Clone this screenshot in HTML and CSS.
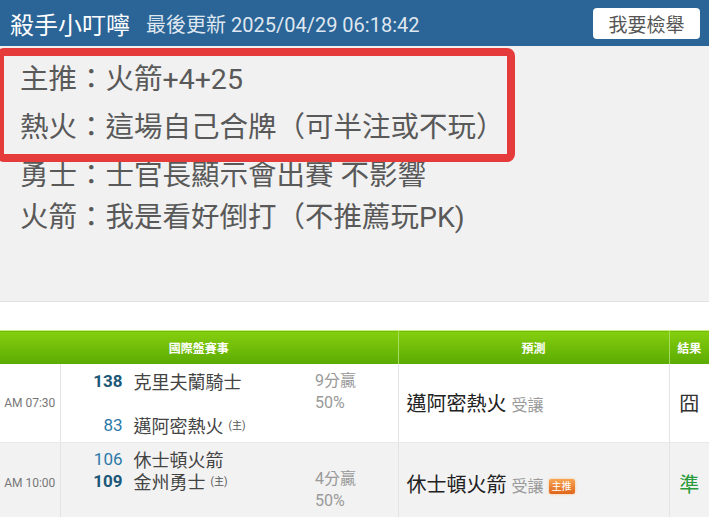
FILE: index.html
```html
<!DOCTYPE html>
<html lang="zh-Hant">
<head>
    <meta name="viewport" content="width=device-width, initial-scale=1.0">
    <title>殺手小叮嚀</title>
    <link rel="stylesheet" href="styles.css">
</head>
<body>
    <div class="page">
        <header class="topbar">
            <span class="title">殺手小叮嚀</span>
            <span class="updated">最後更新 2025/04/29 06:18:42</span>
            <button class="report">我要檢舉</button>
        </header>

        <section class="notes">
            <p>主推：火箭+4+25</p>
            <p>熱火：這場自己合牌（可半注或不玩）</p>
            <p>勇士：士官長顯示會出賽 不影響</p>
            <p class="last">火箭：我是看好倒打（不推薦玩PK)</p>
            <div class="highlight"></div>
        </section>

        <table class="games">
            <colgroup>
                <col class="c-time">
                <col class="c-teams">
                <col class="c-odds">
                <col class="c-pick">
                <col class="c-result">
            </colgroup>
            <thead>
                <tr>
                    <th colspan="3">國際盤賽事</th>
                    <th>預測</th>
                    <th>結果</th>
                </tr>
            </thead>
            <tbody>
                <tr class="row-a">
                    <td class="time">AM 07:30</td>
                    <td class="teams">
                        <div class="line"><span class="num fav">138</span><span class="name">克里夫蘭騎士</span></div>
                        <div class="line"></div>
                        <div class="line"><span class="num">83</span><span class="name">邁阿密熱火</span><span class="home">(主)</span></div>
                    </td>
                    <td class="odds">9分贏<br>50%</td>
                    <td class="pick">邁阿密熱火<span class="spread">受讓</span></td>
                    <td class="result">囧</td>
                </tr>
                <tr class="row-b">
                    <td class="time">AM 10:00</td>
                    <td class="teams">
                        <div class="line"><span class="num">106</span><span class="name">休士頓火箭</span></div>
                        <div class="line"><span class="num fav">109</span><span class="name">金州勇士</span><span class="home">(主)</span></div>
                    </td>
                    <td class="odds">4分贏<br>50%</td>
                    <td class="pick">休士頓火箭<span class="spread">受讓</span><span class="badge">主推</span></td>
                    <td class="result win">準</td>
                </tr>
            </tbody>
        </table>
    </div>
</body>
</html>
```

FILE: styles.css
```css
*{
    padding: 0;
    margin: 0;
    box-sizing: border-box;
    font-family: Roboto, "Noto Sans CJK TC", sans-serif;
}
body{
    background-color: #ffffff;
}
.page{
    width: 709px;
}
.topbar{
    display: flex;
    align-items: center;
    height: 46px;
    padding: 0 9px 0 10px;
    background-color: #2b6496;
}
.title{
    font-size: 24px;
    color: #ffffff;
    margin-right: 16px;
}
.updated{
    font-size: 20px;
    color: #dfe7f0;
}
.report{
    margin-left: auto;
    width: 107px;
    height: 31px;
    border: none;
    border-radius: 4px;
    background-color: #ffffff;
    color: #555555;
    font-size: 19px;
}
.notes{
    position: relative;
    height: 256px;
    padding: 10px 20px;
    background-color: #f1f1f1;
    border-bottom: 1px solid #e2e2e2;
}
.notes p{
    font-size: 28.5px;
    line-height: 48px;
    color: #595959;
}
.notes p.last{
    margin-top: -6px;
}
.highlight{
    position: absolute;
    left: -4px;
    top: 2px;
    width: 519px;
    height: 114px;
    border: 8px solid #e53b3b;
    border-radius: 8px;
}
.games{
    width: 709px;
    margin-top: 28px;
    border-collapse: collapse;
    table-layout: fixed;
}
.c-time{ width: 60px; }
.c-teams{ width: 245px; }
.c-odds{ width: 93px; }
.c-pick{ width: 271px; }
.c-result{ width: 40px; }
.games th{
    height: 33px;
    background: linear-gradient(#86cf0f, #5aaa02);
    border-top: 1px solid #c9ef80;
    color: #ffffff;
    font-size: 12px;
    font-weight: 700;
}
.games th + th{
    border-left: 1px solid #a8dc5c;
}
.games td{
    vertical-align: middle;
}
.row-a{
    height: 78px;
    background-color: #ffffff;
}
.row-b{
    height: 82px;
    background-color: #f2f2f2;
    border-top: 1px solid #e8e8e8;
}
.time{
    text-align: center;
    font-size: 12px;
    color: #777777;
    border-right: 1px solid #e4e4e4;
}
.games td.teams{
    vertical-align: top;
    padding: 6px 0;
}
.row-b td.teams{
    padding-top: 5px;
}
.line{
    display: flex;
    align-items: center;
    height: 22px;
}
.num{
    width: 62px;
    margin-right: 11px;
    text-align: right;
    font-size: 17px;
    color: #2c78a8;
}
.num.fav{
    font-weight: 700;
    color: #1c5878;
}
.name{
    font-size: 18px;
    color: #444444;
}
.home{
    font-size: 10px;
    color: #555555;
    margin-left: 5px;
}
.games td.odds{
    vertical-align: top;
    padding: 6px 0 0 10px;
    font-size: 16px;
    line-height: 22px;
    color: #999999;
}
.row-b td.odds{
    padding-top: 25px;
}
.pick{
    padding-left: 8px;
    font-size: 20px;
    color: #222222;
    border-left: 1px solid #e4e4e4;
}
.spread{
    margin-left: 5px;
    font-size: 16px;
    color: #9a9a9a;
}
.badge{
    display: inline-block;
    margin-left: 5px;
    padding: 0 3px;
    height: 15px;
    line-height: 15px;
    font-size: 10px;
    color: #ffffff;
    vertical-align: 2px;
    border-radius: 2px;
    background: linear-gradient(#f6a552, #e0661d);
    box-shadow: 0 0 3px #f7c98a;
}
.result{
    text-align: center;
    font-size: 20px;
    color: #333333;
    border-left: 1px solid #e4e4e4;
}
.result.win{
    color: #2a9a3a;
}
```
